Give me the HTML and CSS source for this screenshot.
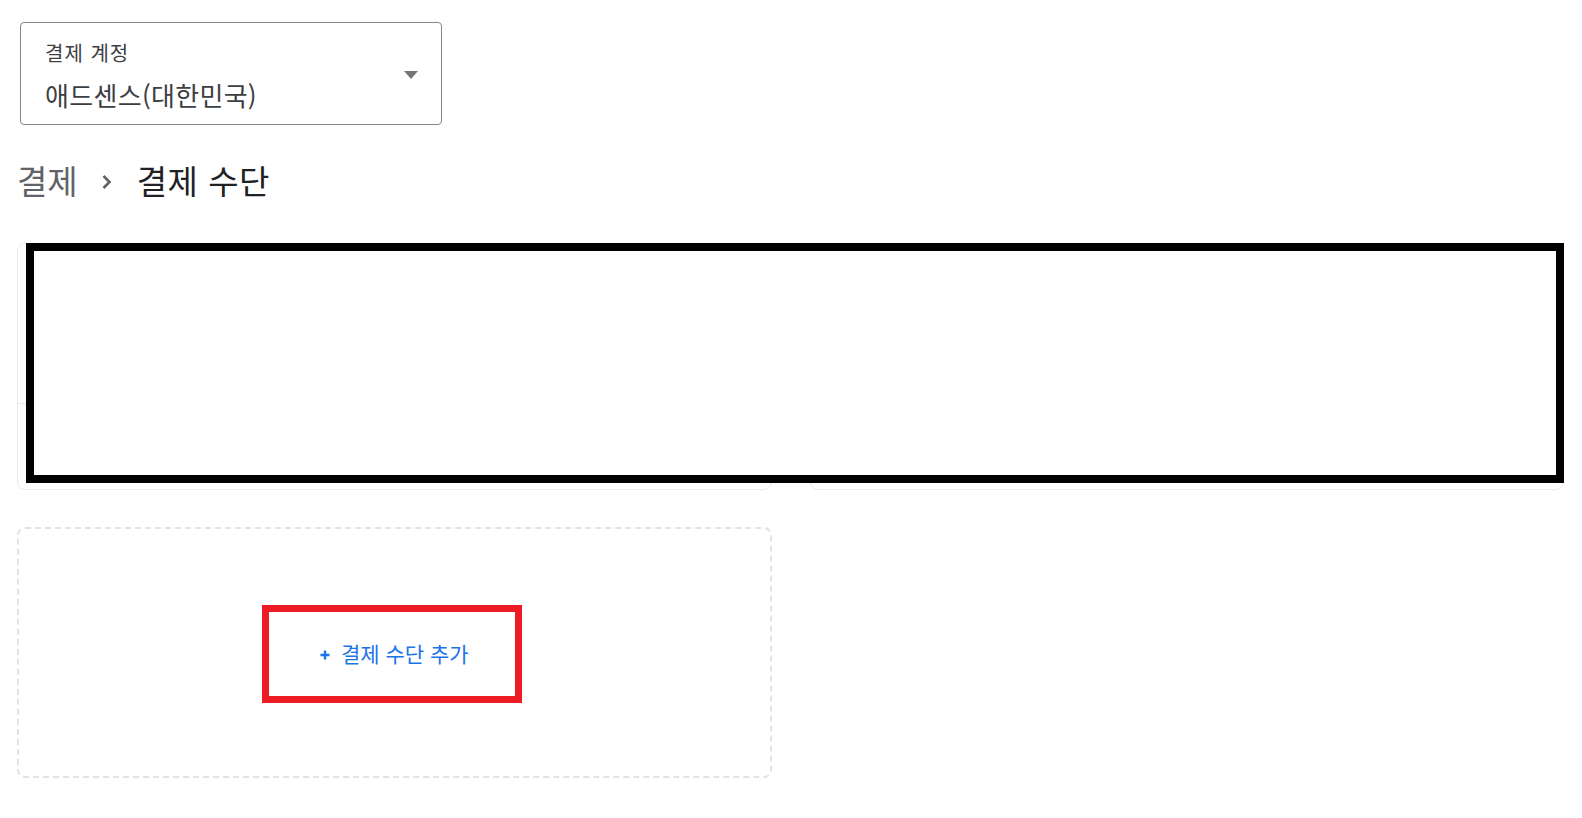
FILE: index.html
```html
<!DOCTYPE html>
<html lang="ko">
<head>
    <meta charset="UTF-8">
    <meta name="viewport" content="width=device-width, initial-scale=1.0">
    <title>결제 수단</title>
    <link rel="stylesheet" href="styles.css">
</head>
<body>
    <div class="page">
        <div class="account-select">
            <div class="account-text">
                <div class="account-label">결제 계정</div>
                <div class="account-value">애드센스(대한민국)</div>
            </div>
            <span class="select-arrow"></span>
        </div>

        <nav class="breadcrumb">
            <span class="crumb-parent">결제</span>
            <svg class="crumb-sep" width="14" height="18" viewBox="0 0 14 18">
                <path d="M3.5 3 L9.5 9 L3.5 15" fill="none" stroke="#5f6368" stroke-width="2.6"/>
            </svg>
            <span class="crumb-current">결제 수단</span>
        </nav>

        <div class="methods">
            <div class="method-card">
                <div class="card-top"></div>
                <div class="card-bottom"></div>
            </div>
            <div class="method-card">
                <div class="card-top"></div>
                <div class="card-bottom"></div>
            </div>

            <!-- 가려진 영역 -->
            <div class="redact"></div>

            <div class="add-card">
                <button class="add-button">
                    <svg width="10" height="10" viewBox="0 0 10 10">
                        <path d="M5 0.5 V9.5 M0.5 5 H9.5" stroke="#1a73e8" stroke-width="2.4"/>
                    </svg>
                    결제 수단 추가
                </button>
                <div class="highlight"></div>
            </div>
        </div>
    </div>
</body>
</html>
```

FILE: styles.css
```css
* {
    margin: 0;
    padding: 0;
    box-sizing: border-box;
}

body {
    font-family: "Noto Sans CJK KR", "Noto Sans", sans-serif;
    background: #fff;
    color: #202124;
}

.page {
    padding: 22px 18px 0 17px;
}

.account-select {
    width: 422px;
    height: 103px;
    margin-left: 3px;
    border: 1px solid #80868b;
    border-radius: 4px;
    display: flex;
    align-items: center;
    justify-content: space-between;
    padding: 0 23px 0 24px;
}

.account-label {
    font-size: 20px;
    line-height: 24px;
    letter-spacing: 1px;
    color: #3c4043;
    margin-top: 4px;
}

.account-value {
    font-size: 26px;
    line-height: 32px;
    letter-spacing: 0.3px;
    color: #3c4043;
    margin-top: 14px;
}

.select-arrow {
    width: 0;
    height: 0;
    border-left: 7px solid transparent;
    border-right: 7px solid transparent;
    border-top: 8px solid #757575;
    margin-top: 2px;
}

.breadcrumb {
    display: flex;
    align-items: center;
    height: 40px;
    margin-top: 35px;
    font-size: 33px;
}

.crumb-parent {
    color: #5f6368;
}

.crumb-sep {
    margin: 4px 23px 0 22px;
}

.crumb-current {
    color: #202124;
    letter-spacing: 0.5px;
}

.methods {
    position: relative;
    display: grid;
    grid-template-columns: 1fr 1fr;
    gap: 37px 38px;
    margin-top: 43px;
}

.method-card {
    height: 247px;
    border: 1px solid #e8eaed;
    border-radius: 8px;
}

.card-top {
    height: 160px;
    border-bottom: 1px solid #e8eaed;
}

.redact {
    position: absolute;
    top: 0;
    left: 9px;
    right: 0;
    height: 240px;
    border: 8px solid #000;
    background: #fff;
}

.add-card {
    position: relative;
    height: 251px;
    border: 2px dashed #e3e3e5;
    border-radius: 8px;
    display: flex;
    align-items: center;
    justify-content: center;
}

.add-button {
    display: flex;
    align-items: center;
    gap: 11px;
    background: none;
    border: none;
    font-family: inherit;
    font-size: 21px;
    color: #1a73e8;
    margin-top: 1px;
}

.add-button svg {
    margin-top: 4px;
}

.highlight {
    position: absolute;
    left: 243px;
    top: 76px;
    width: 260px;
    height: 98px;
    border: 7px solid #ed1c24;
}
```
